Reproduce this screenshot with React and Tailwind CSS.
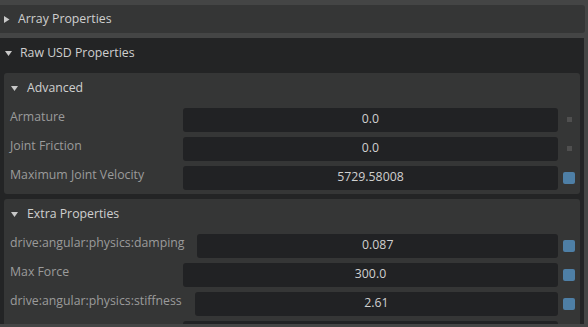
const advancedRows = [
  { label: 'Armature', value: '0.0', flag: 'dot' },
  { label: 'Joint Friction', value: '0.0', flag: 'dot' },
  { label: 'Maximum Joint Velocity', value: '5729.58008', flag: 'blue' },
];

// last row is only a sliver at the bottom edge, so it carries no text
const extraRows = [
  { label: 'drive:angular:physics:damping', value: '0.087', flag: 'blue' },
  { label: 'Max Force', value: '300.0', flag: 'blue' },
  { label: 'drive:angular:physics:stiffness', value: '2.61', flag: 'blue' },
  { label: '', value: '', flag: 'blue' },
];

const TriRight = () => (
  <svg width="6" height="7" viewBox="0 0 6 7" className="shrink-0">
    <path d="M0 0 L5.5 3.5 L0 7 Z" fill="#c8c8c8" />
  </svg>
);

const TriDown = () => (
  <svg width="7" height="5" viewBox="0 0 7 5" className="shrink-0">
    <path d="M0 0 L7 0 L3.5 5 Z" fill="#c8c8c8" />
  </svg>
);

const PropRow = ({ row }) => (
  <div className="flex items-center h-[29px] pl-[6px]">
    <div className="min-w-[173px] pr-[13px] mb-[5px] whitespace-nowrap text-[#9b9b9b] text-[12.3px]">
      {row.label}
    </div>
    <div className="flex-1 h-[24px] rounded-[3px] bg-[#212224] flex items-center justify-center text-[#d0d0d0] text-[12.3px]">
      {row.value}
    </div>
    <div className="w-[22px] flex items-center justify-center">
      {row.flag === 'blue' ? (
        <div className="w-[12px] h-[12px] rounded-[2px] bg-[#4e7fa6]" />
      ) : (
        <div className="w-[5px] h-[5px] bg-[#4f4f4f]" />
      )}
    </div>
  </div>
);

const SubPanel = ({ title, rows, className }) => (
  <div className={`mx-[4px] rounded-[3px] bg-[#353636] overflow-hidden ${className}`}>
    <div className="h-[32px] flex items-center gap-[9px] pl-[7px] pb-[2px]">
      <TriDown />
      <span className="text-[#cfcfcf] text-[12.3px] font-medium">{title}</span>
    </div>
    {rows.map((row, i) => (
      <PropRow key={i} row={row} />
    ))}
  </div>
);

export default function App() {
  return (
    <div
      className="w-[588px] h-[327px] bg-[#444545] overflow-hidden flex flex-col pt-[5px]"
      style={{ fontFamily: '"Open Sans", "Noto Sans", sans-serif' }}
    >
      <div className="h-[28px] mr-[3px] rounded-r-[3px] bg-[#353636] flex items-center gap-[8px] pl-[4px] shrink-0">
        <TriRight />
        <span className="text-[#cfcfcf] text-[12.3px] font-medium">Array Properties</span>
      </div>

      <div className="mt-[5px] mr-[4px] bg-[#232425] flex-1 min-h-0 overflow-hidden">
        <div className="h-[35px] flex items-center gap-[8px] pl-[5px] pb-[4px]">
          <TriDown />
          <span className="text-[#cfcfcf] text-[12.3px] font-medium">Raw USD Properties</span>
        </div>
        <SubPanel title="Advanced" rows={advancedRows} className="pb-[2px]" />
        <SubPanel title="Extra Properties" rows={extraRows} className="mt-[5px]" />
      </div>
      <div className="h-[3px] shrink-0" />
    </div>
  );
}
